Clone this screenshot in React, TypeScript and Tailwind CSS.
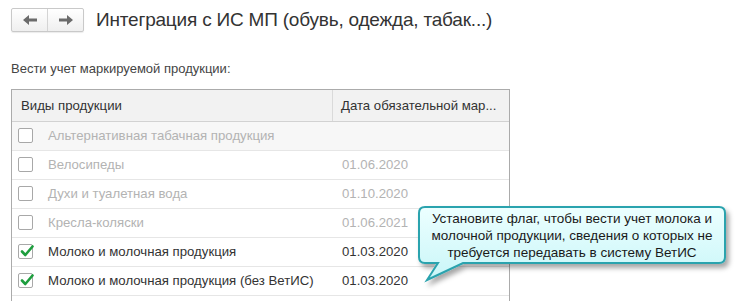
import React from 'react';

const rows = [
  { label: 'Альтернативная табачная продукция', date: '', checked: false, active: false },
  { label: 'Велосипеды', date: '01.06.2020', checked: false, active: false },
  { label: 'Духи и туалетная вода', date: '01.10.2020', checked: false, active: false },
  { label: 'Кресла-коляски', date: '01.06.2021', checked: false, active: false },
  { label: 'Молоко и молочная продукция', date: '01.03.2020', checked: true, active: true },
  { label: 'Молоко и молочная продукция (без ВетИС)', date: '01.03.2020', checked: true, active: true },
  { label: '', date: '', checked: false, active: false, empty: true },
];

const Arrow = ({ dir }: { dir: 'left' | 'right' }) => (
  <svg width="14" height="10" viewBox="0 0 14 10">
    {dir === 'left' ? (
      <path d="M0 5 L6 0 V3.5 H14 V6.5 H6 V10 Z" fill="#6b6b6b" />
    ) : (
      <path d="M14 5 L8 0 V3.5 H0 V6.5 H8 V10 Z" fill="#6b6b6b" />
    )}
  </svg>
);

const Checkbox = ({ checked }: { checked: boolean }) => (
  <div className="relative w-[15px] h-[15px] border border-[#a8a8a8] rounded-[2px] bg-white">
    {checked && (
      <svg className="absolute left-[1px] top-[-1px]" width="14" height="14" viewBox="0 0 14 14">
        <path d="M2 7.5 L5.3 11 L12.5 2.5" stroke="#1e9e3e" strokeWidth="2.6" fill="none" strokeLinecap="round" strokeLinejoin="round" />
      </svg>
    )}
  </div>
);

const Callout = () => (
  <div className="absolute left-[410px] top-[200px] w-[330px] h-[100px]">
    <svg width="330" height="100" viewBox="0 0 330 100" className="absolute inset-0">
      <defs>
        <linearGradient id="cg" x1="0" y1="0" x2="0" y2="1">
          <stop offset="0" stopColor="#ecffff" />
          <stop offset="1" stopColor="#c9f6f8" />
        </linearGradient>
        <filter id="sh" x="-10%" y="-10%" width="130%" height="150%">
          <feDropShadow dx="3" dy="4" stdDeviation="2.5" floodColor="#000" floodOpacity="0.35" />
        </filter>
      </defs>
      <path
        d="M15 7 H309 Q315 7 315 13 V57 Q315 63 309 63 H53 L17 80 L28 63 H15 Q9 63 9 57 V13 Q9 7 15 7 Z"
        fill="url(#cg)"
        stroke="#2ba3ae"
        strokeWidth="2"
        filter="url(#sh)"
      />
    </svg>
    <div className="absolute left-[9px] top-[10px] w-[306px] text-center text-[13.5px] leading-[17px] text-[#1a1a1a]">
      <div>Установите флаг, чтобы вести учет молока и</div>
      <div>молочной продукции, сведения о которых не</div>
      <div>требуется передавать в систему ВетИС</div>
    </div>
  </div>
);

export default function App() {
  return (
    <div
      className="relative w-[740px] h-[301px] overflow-hidden bg-white text-[#333]"
      style={{ fontFamily: '"Liberation Sans", Arial, sans-serif' }}
    >
      <div className="flex items-center pt-[8px] pl-[11px]">
        <div className="flex h-[24px] w-[73px] border border-[#c9c9c9] rounded-[2px] bg-gradient-to-b from-white to-[#efefef] shadow-[0_1px_1px_rgba(0,0,0,0.08)]">
          <button className="flex-1 flex items-center justify-center border-r border-[#d4d4d4]">
            <Arrow dir="left" />
          </button>
          <button className="flex-1 flex items-center justify-center">
            <Arrow dir="right" />
          </button>
        </div>
        <h1 className="ml-[12px] text-[19px] leading-[24px] text-[#333] tracking-[-0.2px]">
          Интеграция с ИС МП (обувь, одежда, табак...)
        </h1>
      </div>

      <div className="mt-[30px] pl-[11px] text-[13px] leading-[14px] text-[#444]">
        Вести учет маркируемой продукции:
      </div>

      <div className="ml-[11px] mt-[13px] w-[499px] border border-[#ababab] text-[13.2px]">
        <div className="flex h-[32px] bg-[#f2f2f2] border-b border-[#d2d2d2]">
          <div className="w-[321px] flex items-center pl-[9px] border-r border-[#dadada]">Виды продукции</div>
          <div className="flex-1 flex items-center pl-[8px]">Дата обязательной мар...</div>
        </div>
        {rows.map((r, i) => (
          <div
            key={i}
            className={`flex h-[29px] items-center border-b border-[#e6e6e6] ${i === 0 ? 'bg-[#f7f7f7]' : 'bg-white'}`}
          >
            <div className="w-[322px] flex items-center pl-[6px]">
              {!r.empty && <Checkbox checked={r.checked} />}
              <span className={`ml-[15px] ${r.active ? 'text-[#333]' : 'text-[#b3b3b3]'}`}>{r.label}</span>
            </div>
            <div className={`pl-[8px] ${r.active ? 'text-[#333]' : 'text-[#b3b3b3]'}`}>{r.date}</div>
          </div>
        ))}
      </div>

      <Callout />
    </div>
  );
}
